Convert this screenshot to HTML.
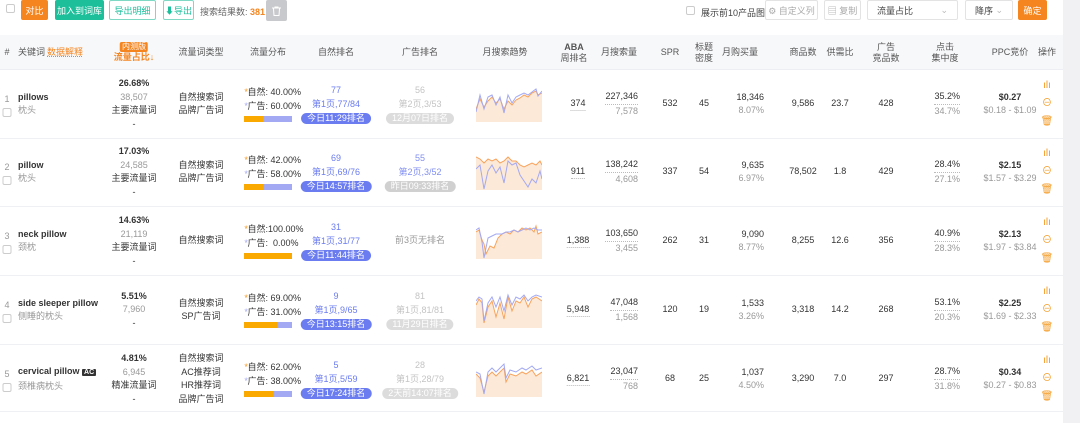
<!DOCTYPE html>
<html><head><meta charset="utf-8">
<style>
*{margin:0;padding:0;box-sizing:border-box}
body{width:1080px;height:423px;overflow:hidden;background:#fff;font-family:"Liberation Sans","Noto Sans CJK SC",sans-serif;font-size:9px;color:#333;position:relative}
.a{position:absolute}
.btn{position:absolute;top:0;height:20px;border-radius:2px;font-size:9px;display:flex;align-items:center;justify-content:center;white-space:nowrap}
.hd{position:absolute;top:35px;left:0;width:1063px;height:35px;background:#f7f8fa;border-bottom:1px solid #eceef3}
.hd div{position:absolute;top:0;height:35px;display:flex;flex-direction:column;align-items:center;justify-content:center;text-align:center;color:#555;font-size:9px;line-height:11px;transform:translateX(-50%);white-space:nowrap}
.hd div.nl{transform:none}
.row{position:absolute;left:0;width:1063px;height:69px;border-bottom:1px solid #eef0f3}
.c{position:absolute;top:0;height:68px;display:flex;flex-direction:column;align-items:center;justify-content:center;text-align:center;line-height:13.5px;transform:translateX(-50%);white-space:nowrap}
.r{align-items:flex-end;transform:none}
.l{align-items:flex-start;transform:none}
.g{color:#999}.b{color:#6b7cf0}.p{color:#c4c4c4}
.bd{font-weight:bold}
.badge{background:#6b7cf0;color:#fff;border-radius:7px;padding:0 6px;line-height:11px;margin-top:2px}
.gb{background:#dcdcdc;color:#fff;border-radius:7px;padding:0 6px;line-height:11px;margin-top:2px}
.bar{width:48px;height:6px;background:#a3a9f3;margin-top:3px;display:flex}
.bar i{display:block;height:6px;background:#f9a900}
.st{color:#f59a23}.sb{color:#a3a9f3}
.cb{position:absolute;width:9px;height:9px;border:1px solid #ccc;border-radius:2px;background:#fff}
.dot{border-bottom:1px dotted #bbb}
.ops{line-height:18px;font-size:10px}
</style></head><body>
<div class="cb" style="left:6px;top:4px"></div>
<div class="btn" style="left:21px;width:27px;background:#f5851f;color:#fff">对比</div>
<div class="btn" style="left:55px;width:49px;background:#1dbf9b;color:#fff">加入到词库</div>
<div class="btn" style="left:109px;width:47px;border:1px solid #7fd8c3;color:#1dbf9b">导出明细</div>
<div class="btn" style="left:163px;width:31px;border:1px solid #7fd8c3;color:#1dbf9b">⬇导出</div>
<div class="a" style="left:200px;top:5px;color:#666">搜索结果数: <b style="color:#f5851f">381</b></div>
<div class="btn" style="left:266px;width:21px;height:21px;background:#c8c9cc;color:#fff">
<svg width="9" height="10" viewBox="0 0 9 10"><path d="M0 2h9M3 2V1h3v1M1.5 2.5l.5 7h5l.5-7" fill="none" stroke="#fff" stroke-width="1"/></svg></div>
<div class="cb" style="left:686px;top:6px"></div>
<div class="a" style="left:701px;top:6px;color:#444">展示前10产品图</div>
<div class="btn" style="left:765px;width:53px;border:1px solid #e3e3e3;color:#aaa">⚙ 自定义列</div>
<div class="btn" style="left:824px;width:37px;border:1px solid #e3e3e3;color:#aaa">▤ 复制</div>
<div class="btn" style="left:867px;width:91px;border:1px solid #e3e3e3;color:#444;justify-content:space-between;padding:0 9px">流量占比<span style="color:#bbb">⌄</span></div>
<div class="btn" style="left:965px;width:48px;border:1px solid #e3e3e3;color:#444;justify-content:space-between;padding:0 9px">降序<span style="color:#bbb">⌄</span></div>
<div class="btn" style="left:1018px;width:29px;background:#f5851f;color:#fff">确定</div>
<div class="a" style="left:1063px;top:0;width:17px;height:423px;background:#f1f1f3"></div>

<div class="hd">
<div style="left:7px">#</div>
<div class="nl" style="left:18px">关键词</div>
<div class="nl" style="left:47px;color:#f5851f;text-decoration:underline dotted">数据解释</div>
<div style="left:134px;color:#f5851f;font-weight:bold"><span style="background:#f5851f;color:#fff;border-radius:2px;padding:0 2px;font-weight:normal;font-size:8px;line-height:10px">内测版</span>流量占比↓</div>
<div style="left:201px">流量词类型</div>
<div style="left:268px">流量分布</div>
<div style="left:336px">自然排名</div>
<div style="left:420px">广告排名</div>
<div style="left:505px">月搜索趋势</div>
<div style="left:574px"><b>ABA</b>周排名</div>
<div style="left:619px">月搜索量</div>
<div style="left:670px">SPR</div>
<div style="left:704px">标题<br>密度</div>
<div style="left:740px">月购买量</div>
<div style="left:803px">商品数</div>
<div style="left:840px">供需比</div>
<div style="left:886px">广告<br>竞品数</div>
<div style="left:945px">点击<br>集中度</div>
<div style="left:1010px">PPC竞价</div>
<div style="left:1047px">操作</div>
</div>

<div class="row" style="top:70px">
<div class="c g" style="left:7px;line-height:14px">1<span class="cb" style="position:static;margin-top:2px"></span></div>
<div class="c l" style="left:18px"><span class="bd">pillows</span><span class="g">枕头</span></div>
<div class="c" style="left:134px"><span class="bd">26.68%</span><span class="g">38,507</span><span>主要流量词</span><span>-</span></div>
<div class="c" style="left:201px"><span>自然搜索词</span><span>品牌广告词</span></div>
<div class="c l" style="left:244px"><span><i class="st">*</i>自然: 40.00%</span><span><i class="sb">*</i>广告: 60.00%</span><div class="bar"><i style="width:40%"></i></div></div>
<div class="c b" style="left:336px"><span>77</span><span>第1页,77/84</span><span class="badge">今日11:29排名</span></div>
<div class="c p" style="left:420px"><span>56</span><span>第2页,3/53</span><span class="gb">12月07日排名</span></div>
<svg class="a" style="left:476px;top:17px" width="66" height="35"><polygon points="0,35 0,22 4,12 8,20 12,14 16,10 20,16 24,12 28,22 32,14 36,18 40,13 44,11 48,8 52,10 56,6 60,4 62,8 66,6 66,35" fill="#fde9d7"/><polyline points="0,22 4,12 8,20 12,14 16,10 20,16 24,12 28,22 32,14 36,18 40,13 44,11 48,8 52,10 56,6 60,4 62,8 66,6" fill="none" stroke="#f8a35c"/><polyline points="0,25 4,8 8,22 12,10 16,8 20,18 24,10 28,26 32,8 36,16 40,10 44,8 48,6 52,8 56,5 60,2 62,9 66,4" fill="none" stroke="#a3a9f3"/></svg>
<div class="c" style="left:578px"><span class="dot">374</span></div>
<div class="c r" style="left:600px;width:38px"><span class="dot">227,346</span><span class="g">7,578</span></div>
<div class="c" style="left:670px">532</div><div class="c" style="left:704px">45</div>
<div class="c r" style="left:720px;width:44px"><span>18,346</span><span class="g">8.07%</span></div>
<div class="c" style="left:803px">9,586</div><div class="c" style="left:840px">23.7</div><div class="c" style="left:886px">428</div>
<div class="c r" style="left:920px;width:40px"><span class="dot">35.2%</span><span class="g">34.7%</span></div>
<div class="c" style="left:1010px"><span class="bd">$0.27</span><span class="g">$0.18 - $1.09</span></div>
<div class="c st ops" style="left:1047px"><span>ılı</span><span>⊖</span><span>🗑</span></div>
</div>

<div class="row" style="top:138px">
<div class="c g" style="left:7px;line-height:14px">2<span class="cb" style="position:static;margin-top:2px"></span></div>
<div class="c l" style="left:18px"><span class="bd">pillow</span><span class="g">枕头</span></div>
<div class="c" style="left:134px"><span class="bd">17.03%</span><span class="g">24,585</span><span>主要流量词</span><span>-</span></div>
<div class="c" style="left:201px"><span>自然搜索词</span><span>品牌广告词</span></div>
<div class="c l" style="left:244px"><span><i class="st">*</i>自然: 42.00%</span><span><i class="sb">*</i>广告: 58.00%</span><div class="bar"><i style="width:42%"></i></div></div>
<div class="c b" style="left:336px"><span>69</span><span>第1页,69/76</span><span class="badge">今日14:57排名</span></div>
<div class="c b" style="left:420px;opacity:.85"><span>55</span><span>第2页,3/52</span><span class="gb" style="background:#c8c8c8">昨日09:33排名</span></div>
<svg class="a" style="left:476px;top:17px" width="66" height="35"><polygon points="0,35 0,2 4,4 8,8 12,4 16,6 20,4 24,8 28,6 32,2 36,6 40,6 44,10 48,12 52,10 56,8 60,10 64,6 66,10 66,35" fill="#fde9d7"/><polyline points="0,2 4,4 8,8 12,4 16,6 20,4 24,8 28,6 32,2 36,6 40,6 44,10 48,12 52,10 56,8 60,10 64,6 66,10" fill="none" stroke="#f8a35c"/><polyline points="0,14 4,10 8,34 12,16 16,10 20,18 24,12 28,28 32,6 36,10 40,8 44,20 48,26 52,32 56,24 60,28 64,16 66,24" fill="none" stroke="#a3a9f3"/></svg>
<div class="c" style="left:578px"><span class="dot">911</span></div>
<div class="c r" style="left:600px;width:38px"><span class="dot">138,242</span><span class="g">4,608</span></div>
<div class="c" style="left:670px">337</div><div class="c" style="left:704px">54</div>
<div class="c r" style="left:720px;width:44px"><span>9,635</span><span class="g">6.97%</span></div>
<div class="c" style="left:803px">78,502</div><div class="c" style="left:840px">1.8</div><div class="c" style="left:886px">429</div>
<div class="c r" style="left:920px;width:40px"><span class="dot">28.4%</span><span class="g">27.1%</span></div>
<div class="c" style="left:1010px"><span class="bd">$2.15</span><span class="g">$1.57 - $3.29</span></div>
<div class="c st ops" style="left:1047px"><span>ılı</span><span>⊖</span><span>🗑</span></div>
</div>

<div class="row" style="top:207px">
<div class="c g" style="left:7px;line-height:14px">3<span class="cb" style="position:static;margin-top:2px"></span></div>
<div class="c l" style="left:18px"><span class="bd">neck pillow</span><span class="g">颈枕</span></div>
<div class="c" style="left:134px"><span class="bd">14.63%</span><span class="g">21,119</span><span>主要流量词</span><span>-</span></div>
<div class="c" style="left:201px"><span>自然搜索词</span></div>
<div class="c l" style="left:244px"><span><i class="st">*</i>自然:100.00%</span><span><i class="sb">*</i>广告: &nbsp;0.00%</span><div class="bar"><i style="width:100%"></i></div></div>
<div class="c b" style="left:336px"><span>31</span><span>第1页,31/77</span><span class="badge">今日11:44排名</span></div>
<div class="c g" style="left:420px">前3页无排名</div>
<svg class="a" style="left:476px;top:17px" width="66" height="35"><polygon points="0,35 0,8 3,6 6,16 8,20 10,30 14,22 18,24 22,14 26,10 30,8 34,10 38,6 42,8 46,4 50,6 54,4 58,8 60,2 62,10 66,8 66,35" fill="#fde9d7"/><polyline points="0,8 3,6 6,16 8,20 10,30 14,22 18,24 22,14 26,10 30,8 34,10 38,6 42,8 46,4 50,6 54,4 58,8 60,2 62,10 66,8" fill="none" stroke="#f8a35c"/><polyline points="0,6 3,4 6,18 8,34 12,14 16,12 20,10 26,10 30,8 34,8 38,6 42,8 46,6 50,4 54,6 58,4 62,6 66,6" fill="none" stroke="#a3a9f3"/></svg>
<div class="c" style="left:578px"><span class="dot">1,388</span></div>
<div class="c r" style="left:600px;width:38px"><span class="dot">103,650</span><span class="g">3,455</span></div>
<div class="c" style="left:670px">262</div><div class="c" style="left:704px">31</div>
<div class="c r" style="left:720px;width:44px"><span>9,090</span><span class="g">8.77%</span></div>
<div class="c" style="left:803px">8,255</div><div class="c" style="left:840px">12.6</div><div class="c" style="left:886px">356</div>
<div class="c r" style="left:920px;width:40px"><span class="dot">40.9%</span><span class="g">28.3%</span></div>
<div class="c" style="left:1010px"><span class="bd">$2.13</span><span class="g">$1.97 - $3.84</span></div>
<div class="c st ops" style="left:1047px"><span>ılı</span><span>⊖</span><span>🗑</span></div>
</div>

<div class="row" style="top:276px">
<div class="c g" style="left:7px;line-height:14px">4<span class="cb" style="position:static;margin-top:2px"></span></div>
<div class="c l" style="left:18px"><span class="bd">side sleeper pillow</span><span class="g">侧睡的枕头</span></div>
<div class="c" style="left:134px"><span class="bd">5.51%</span><span class="g">7,960</span><span>-</span></div>
<div class="c" style="left:201px"><span>自然搜索词</span><span>SP广告词</span></div>
<div class="c l" style="left:244px"><span><i class="st">*</i>自然: 69.00%</span><span><i class="sb">*</i>广告: 31.00%</span><div class="bar"><i style="width:69%"></i></div></div>
<div class="c b" style="left:336px"><span>9</span><span>第1页,9/65</span><span class="badge">今日13:15排名</span></div>
<div class="c p" style="left:420px"><span>81</span><span>第1页,81/81</span><span class="gb">11月29日排名</span></div>
<svg class="a" style="left:476px;top:17px" width="66" height="35"><polygon points="0,35 0,12 3,6 6,10 8,30 12,14 16,8 20,24 24,10 28,26 32,4 36,18 40,8 44,10 48,4 52,14 56,6 60,4 66,8 66,35" fill="#fde9d7"/><polyline points="0,12 3,6 6,10 8,30 12,14 16,8 20,24 24,10 28,26 32,4 36,18 40,8 44,10 48,4 52,14 56,6 60,4 66,8" fill="none" stroke="#f8a35c"/><polyline points="0,8 3,4 6,6 8,28 12,10 16,4 20,14 24,4 28,18 32,2 36,12 40,4 44,6 48,2 52,8 56,4 60,2 66,4" fill="none" stroke="#a3a9f3"/></svg>
<div class="c" style="left:578px"><span class="dot">5,948</span></div>
<div class="c r" style="left:600px;width:38px"><span class="dot">47,048</span><span class="g">1,568</span></div>
<div class="c" style="left:670px">120</div><div class="c" style="left:704px">19</div>
<div class="c r" style="left:720px;width:44px"><span>1,533</span><span class="g">3.26%</span></div>
<div class="c" style="left:803px">3,318</div><div class="c" style="left:840px">14.2</div><div class="c" style="left:886px">268</div>
<div class="c r" style="left:920px;width:40px"><span class="dot">53.1%</span><span class="g">20.3%</span></div>
<div class="c" style="left:1010px"><span class="bd">$2.25</span><span class="g">$1.69 - $2.33</span></div>
<div class="c st ops" style="left:1047px"><span>ılı</span><span>⊖</span><span>🗑</span></div>
</div>

<div class="row" style="top:345px;height:67px">
<div class="c g" style="left:7px;line-height:14px">5<span class="cb" style="position:static;margin-top:2px"></span></div>
<div class="c l" style="left:18px"><span class="bd">cervical pillow <i style="background:#333;color:#fff;font-style:normal;font-size:7px;padding:0 2px;border-radius:1px">AC</i></span><span class="g">颈椎病枕头</span></div>
<div class="c" style="left:134px"><span class="bd">4.81%</span><span class="g">6,945</span><span>精准流量词</span><span>-</span></div>
<div class="c" style="left:201px"><span>自然搜索词</span><span>AC推荐词</span><span>HR推荐词</span><span>品牌广告词</span></div>
<div class="c l" style="left:244px"><span><i class="st">*</i>自然: 62.00%</span><span><i class="sb">*</i>广告: 38.00%</span><div class="bar"><i style="width:62%"></i></div></div>
<div class="c b" style="left:336px"><span>5</span><span>第1页,5/59</span><span class="badge">今日17:24排名</span></div>
<div class="c p" style="left:420px"><span>28</span><span>第1页,28/79</span><span class="gb">2天前14:07排名</span></div>
<svg class="a" style="left:476px;top:17px" width="66" height="35"><polygon points="0,35 0,12 4,16 8,30 12,14 16,10 20,14 24,10 28,6 30,20 34,12 40,14 46,10 50,12 56,8 60,14 66,10 66,35" fill="#fde9d7"/><polyline points="0,12 4,16 8,30 12,14 16,10 20,14 24,10 28,6 30,20 34,12 40,14 46,10 50,12 56,8 60,14 66,10" fill="none" stroke="#f8a35c"/><polyline points="0,10 4,12 8,32 12,10 16,6 20,10 24,6 28,2 30,16 34,8 40,10 46,6 50,8 56,4 60,8 66,6" fill="none" stroke="#a3a9f3"/></svg>
<div class="c" style="left:578px"><span class="dot">6,821</span></div>
<div class="c r" style="left:600px;width:38px"><span class="dot">23,047</span><span class="g">768</span></div>
<div class="c" style="left:670px">68</div><div class="c" style="left:704px">25</div>
<div class="c r" style="left:720px;width:44px"><span>1,037</span><span class="g">4.50%</span></div>
<div class="c" style="left:803px">3,290</div><div class="c" style="left:840px">7.0</div><div class="c" style="left:886px">297</div>
<div class="c r" style="left:920px;width:40px"><span class="dot">28.7%</span><span class="g">31.8%</span></div>
<div class="c" style="left:1010px"><span class="bd">$0.34</span><span class="g">$0.27 - $0.83</span></div>
<div class="c st ops" style="left:1047px"><span>ılı</span><span>⊖</span><span>🗑</span></div>
</div>
</body></html>
